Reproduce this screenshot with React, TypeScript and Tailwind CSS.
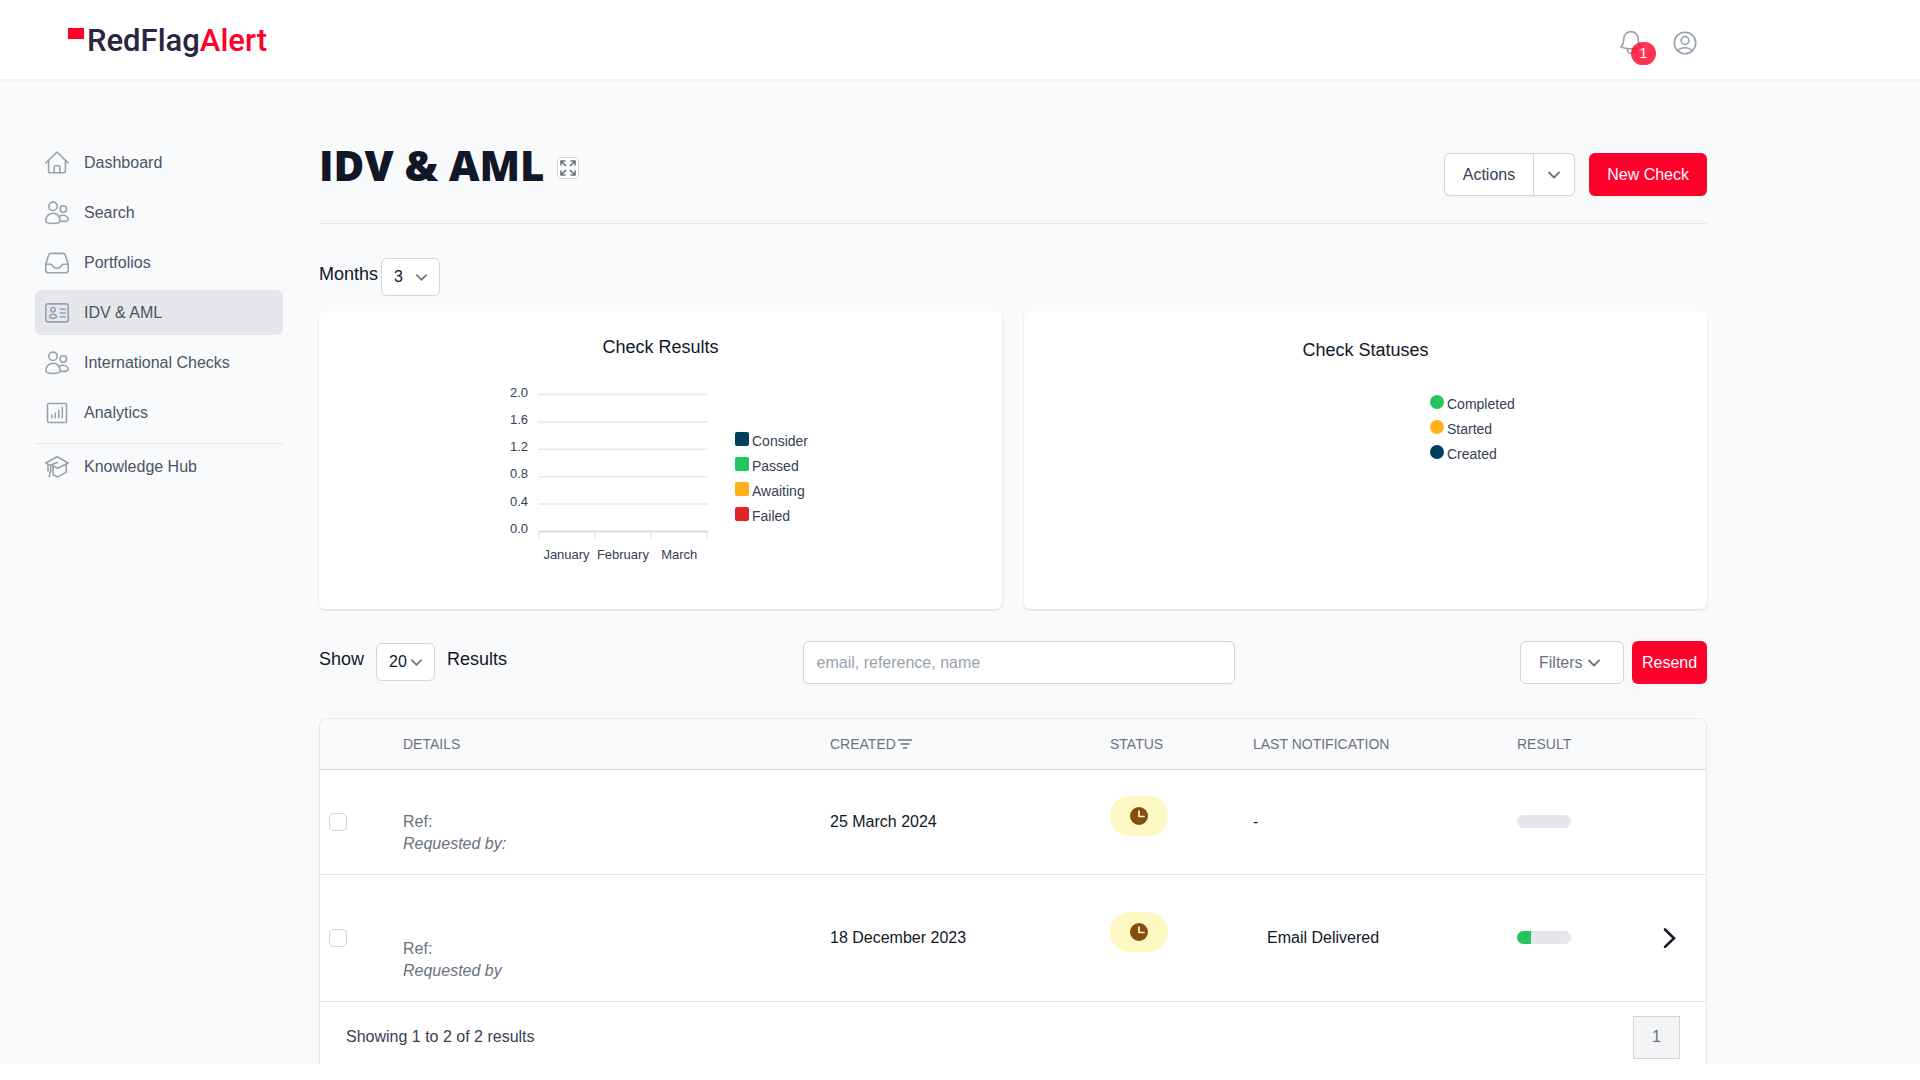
import { useState } from "react";
import type { ReactNode } from "react";

const navItems = [
  { name: "Dashboard", icon: <HouseIcon /> },
  { name: "Search", icon: <UsersIcon /> },
  { name: "Portfolios", icon: <InboxIcon /> },
  { name: "IDV & AML", icon: <IdCardIcon /> },
  { name: "International Checks", icon: <UsersIcon /> },
  { name: "Analytics", icon: <AnalyticsIcon /> },
];

const checks = [
  { id: 1, blankLines: 1, by: "Requested by:", created: "25 March 2024", notification: "-", progress: 0 },
  { id: 2, blankLines: 2, by: "Requested by", created: "18 December 2023", notification: "Email Delivered", progress: 26 },
];

export default function App() {
  const [active, setActive] = useState("IDV & AML");

  return (
    <div className="bg-[#f9fafc] font-['Liberation_Sans',Arial,sans-serif] text-base text-gray-900">
      <Header />
      <div className="flex max-w-[1707px] gap-9 pl-[35px]">
        <aside className="w-[248px] shrink-0 pt-[60px]">
          <nav>
            <div className="flex flex-col gap-[5px] border-b border-gray-200 pb-2">
              {navItems.map((item) => (
                <NavLink
                  key={item.name}
                  name={item.name}
                  icon={item.icon}
                  active={active == item.name}
                  onClick={() => setActive(item.name)}
                />
              ))}
            </div>
            <NavLink
              name="Knowledge Hub"
              icon={<HubIcon />}
              active={active == "Knowledge Hub"}
              onClick={() => setActive("Knowledge Hub")}
            />
          </nav>
        </aside>
        <main className="min-w-0 flex-1 pt-[65px]">
          <TitleBar />
          <Months />
          <div className="mt-[15px] grid grid-cols-2 gap-[22px]">
            <CheckResults />
            <CheckStatuses />
          </div>
          <Toolbar />
          <ChecksTable />
        </main>
      </div>
    </div>
  );
}

function Header() {
  return (
    <header className="border-b border-gray-100 bg-white shadow-xs">
      <div className="flex h-[79px] max-w-[1707px] items-center justify-between pr-[10px] pl-[68px]">
        <a href="#" className="flex items-center gap-[3px] pt-[2px]" aria-label="RedFlagAlert">
          <span className="-mt-[15px] h-[11px] w-4 bg-[#ff002b]"></span>
          <span className="font-[Roboto,sans-serif] text-[31px] leading-10 font-medium text-[#2d2540]">
            RedFlag<span className="text-[#ff002b]">Alert</span>
          </span>
        </a>
        <div className="flex items-center gap-[30px] pt-[6px] text-gray-400">
          <button className="relative" aria-label="Notifications">
            <BellIcon />
            <span className="absolute top-[11px] left-3 flex h-[23px] w-[25px] items-center justify-center rounded-full bg-[#ff002b]/80 text-sm text-white">
              1
            </span>
          </button>
          <button aria-label="Account">
            <UserCircleIcon />
          </button>
        </div>
      </div>
    </header>
  );
}

function NavLink({ name, icon, active, onClick }: { name: string; icon: ReactNode; active: boolean; onClick: () => void }) {
  return (
    <a
      href="#"
      onClick={onClick}
      className={`${
        active ? "bg-gray-200" : "hover:bg-gray-100"
      } flex h-[45px] items-center gap-[15px] rounded-md px-[10px] text-gray-600`}
    >
      <span className="text-gray-400">{icon}</span>
      {name}
    </a>
  );
}

function TitleBar() {
  return (
    <div className="flex items-start justify-between border-b border-gray-200 pb-[27px]">
      <div className="flex items-start gap-3">
        <h1 className="font-['Open_Sans',sans-serif] text-[42px] leading-10 font-extrabold">IDV &amp; AML</h1>
        <button
          className="mt-3 flex size-[22px] items-center justify-center rounded border border-gray-300 bg-white text-gray-500"
          aria-label="Expand"
        >
          <ExpandIcon />
        </button>
      </div>
      <div className="mt-2 flex gap-[14px]">
        <div className="flex rounded-md border border-gray-300 bg-white shadow-xs">
          <button className="px-[18px] text-gray-700">Actions</button>
          <button className="w-[41px] border-l border-gray-300 text-gray-500" aria-label="More actions">
            <ChevronDown className="mx-auto size-3" />
          </button>
        </div>
        <button className="h-[43px] rounded-md bg-[#ff002b] px-[18px] text-white shadow-xs">New Check</button>
      </div>
    </div>
  );
}

function Months() {
  const [months, setMonths] = useState("3");

  return (
    <div className="mt-[34px] flex items-start gap-[3px]">
      <label htmlFor="months" className="text-lg leading-[33px]">
        Months
      </label>
      <SelectBox id="months" value={months} onChange={setMonths} options={["3", "6", "12"]} />
    </div>
  );
}

function SelectBox({
  id,
  value,
  onChange,
  options,
}: {
  id: string;
  value: string;
  onChange: (value: string) => void;
  options: string[];
}) {
  return (
    <div className="relative">
      <select
        id={id}
        value={value}
        onChange={(e) => onChange(e.target.value)}
        className="h-[38px] w-[59px] appearance-none rounded-md border border-gray-300 bg-white pl-3"
      >
        {options.map((option) => (
          <option key={option}>{option}</option>
        ))}
      </select>
      <ChevronDown className="pointer-events-none absolute top-[14px] right-[13px] size-[11px] text-gray-500" />
    </div>
  );
}

function CheckResults() {
  return (
    <section className="rounded-md bg-white pt-[22px] pb-[45px] shadow-sm">
      <h2 className="text-center text-lg leading-7">Check Results</h2>
      <div className="mt-[23px] flex justify-center gap-[23px]">
        <ResultsChart />
        <ul className="mt-[45px] w-[84px] text-sm leading-[25px] text-gray-700">
          <LegendItem color="bg-[#003f5c] rounded-xs" label="Consider" />
          <LegendItem color="bg-[#22c55e] rounded-xs" label="Passed" />
          <LegendItem color="bg-[#ffb01a] rounded-xs" label="Awaiting" />
          <LegendItem color="bg-[#dc2626] rounded-xs" label="Failed" />
        </ul>
      </div>
    </section>
  );
}

function CheckStatuses() {
  return (
    <section className="rounded-md bg-white pt-[25px] shadow-sm">
      <h2 className="text-center text-lg leading-7">Check Statuses</h2>
      <div className="mt-7 flex justify-center">
        <div className="w-[213px]"></div>
        <ul className="w-[84px] text-sm leading-[25px] text-gray-700">
          <LegendItem color="bg-[#22c55e] rounded-full" label="Completed" />
          <LegendItem color="bg-[#ffb01a] rounded-full" label="Started" />
          <LegendItem color="bg-[#003f5c] rounded-full" label="Created" />
        </ul>
      </div>
    </section>
  );
}

function LegendItem({ color, label }: { color: string; label: string }) {
  return (
    <li className="flex items-start gap-[3px]">
      <span className={`${color} mt-[3px] size-[14px] shrink-0`}></span>
      {label}
    </li>
  );
}

function ResultsChart() {
  const labels = ["2.0", "1.6", "1.2", "0.8", "0.4", "0.0"];
  const months = ["January", "February", "March"];
  return (
    <svg width="210" height="180" viewBox="0 0 210 180" className="fill-gray-700 text-[13px]">
      {labels.map((label, i) => (
        <g key={label}>
          <text x="26" y={12.5 + i * 27.3} textAnchor="end">
            {label}
          </text>
          <line
            x1="36.5"
            x2="205.5"
            y1={10.5 + i * 27.4}
            y2={10.5 + i * 27.4}
            stroke={i == 5 ? "#dcdcdc" : "#e8e8e8"}
            strokeWidth={i == 5 ? 2 : 1.5}
          />
        </g>
      ))}
      {[37, 93, 149, 205].map((x) => (
        <line key={x} x1={x} x2={x} y1="148" y2="155" stroke="#e0e0e0" />
      ))}
      {months.map((month, i) => (
        <text key={month} x={64.5 + i * 56.4} y="175" textAnchor="middle">
          {month}
        </text>
      ))}
    </svg>
  );
}

function Toolbar() {
  const [show, setShow] = useState("20");
  const [search, setSearch] = useState("");

  return (
    <div className="mt-8 flex items-start">
      <div className="mt-[2px] flex items-start gap-3 text-lg leading-[33px]">
        <label htmlFor="show">Show</label>
        <div className="text-base">
          <SelectBox id="show" value={show} onChange={setShow} options={["20", "50", "100"]} />
        </div>
        <span>Results</span>
      </div>
      <div className="flex flex-1 justify-center pl-[10px]">
        <input
          type="text"
          aria-label="Search checks"
          value={search}
          onChange={(e) => setSearch(e.target.value)}
          placeholder="email, reference, name"
          className="h-[43px] w-[432px] rounded-md border border-gray-300 bg-white px-[13px] shadow-xs placeholder:text-gray-400"
        />
      </div>
      <div className="flex gap-2">
        <button className="flex h-[43px] w-[104px] items-center gap-[5px] rounded-md border border-gray-300 bg-white pl-[18px] text-gray-500">
          Filters
          <ChevronDown className="size-3" />
        </button>
        <button className="h-[43px] w-[75px] rounded-md bg-[#ff002b] text-white">Resend</button>
      </div>
    </div>
  );
}

function ChecksTable() {
  return (
    <div className="mt-[34px] overflow-hidden rounded-t-lg border border-b-0 border-gray-200 bg-white">
      <table className="w-full table-fixed text-left">
        <colgroup>
          <col className="w-[63px]" />
          <col />
          <col className="w-[280px]" />
          <col className="w-[143px]" />
          <col className="w-[264px]" />
          <col className="w-[107px]" />
          <col className="w-[102px]" />
        </colgroup>
        <thead>
          <tr className="h-[50px] border-b border-gray-300 bg-[#f9fafc] text-sm text-gray-500">
            <th></th>
            <th className="px-5 font-normal">DETAILS</th>
            <th className="px-5 font-normal">
              <span className="flex items-center gap-[2px]">
                CREATED
                <SortIcon />
              </span>
            </th>
            <th className="px-5 font-normal">STATUS</th>
            <th className="px-5 font-normal">LAST NOTIFICATION</th>
            <th className="px-5 font-normal">RESULT</th>
            <th></th>
          </tr>
        </thead>
        <tbody>
          {checks.map((check) => (
            <tr key={check.id} className="border-b border-gray-200">
              <td className="pl-[9px]">
                <input
                  type="checkbox"
                  aria-label={`Select check ${check.id}`}
                  className="block size-[18px] appearance-none rounded border border-gray-300 bg-white checked:bg-[#ff002b]"
                />
              </td>
              <td className="px-5 py-[19px] leading-[22px] text-gray-500">
                <div className={check.blankLines == 2 ? "h-11" : "h-[22px]"}></div>
                <div>Ref:</div>
                <div className="italic">{check.by}</div>
              </td>
              <td className="px-5">{check.created}</td>
              <td className="px-5">
                <span className="mb-3 flex h-10 w-[58px] items-center justify-center rounded-[20px] bg-[#fef9c3]">
                  <ClockIcon />
                </span>
              </td>
              <td className="px-5">
                <span className={check.notification == "-" ? "" : "pl-[14px]"}>{check.notification}</span>
              </td>
              <td className="px-5">
                <div className="h-[13px] w-[54px] overflow-hidden rounded-full bg-gray-200">
                  <div className="h-full bg-[#22c55e]" style={{ width: `${check.progress}%` }}></div>
                </div>
              </td>
              <td className="pr-6">
                {check.progress > 0 && (
                  <button className="ml-auto block" aria-label="Open check">
                    <svg className="size-6" viewBox="0 0 24 24" fill="none" stroke="#111827" strokeWidth="2.6">
                      <path d="M7 3.5l9 8.7-9 8.7" strokeLinecap="round" />
                    </svg>
                  </button>
                )}
              </td>
            </tr>
          ))}
        </tbody>
      </table>
      <div className="flex items-center justify-between px-[26px] pt-[14px] pb-[5px] text-gray-700">
        <p>Showing 1 to 2 of 2 results</p>
        <button className="h-[43px] w-[47px] border border-gray-300 bg-gray-100 text-gray-500">1</button>
      </div>
    </div>
  );
}

function ChevronDown({ className }: { className: string }) {
  return (
    <svg className={className} viewBox="0 0 12 12" fill="none" stroke="currentColor" strokeWidth="1.8">
      <path d="M1 3.5l5 5 5-5" strokeLinecap="round" strokeLinejoin="round" />
    </svg>
  );
}

function Icon({ children }: { children: ReactNode }) {
  return (
    <svg
      className="size-6"
      viewBox="0 0 24 24"
      fill="none"
      stroke="currentColor"
      strokeWidth="1.6"
      strokeLinecap="round"
      strokeLinejoin="round"
    >
      {children}
    </svg>
  );
}

function HouseIcon() {
  return (
    <Icon>
      <path d="M.8 12 12 1l11.2 11" />
      <path d="M3.6 9.5v11.3a1 1 0 0 0 1 1h14.8a1 1 0 0 0 1-1V9.5" />
      <path d="M9.2 21.7v-5.5a1.5 1.5 0 0 1 1.5-1.5h2.6a1.5 1.5 0 0 1 1.5 1.5v5.5" />
    </Icon>
  );
}

function UsersIcon() {
  return (
    <Icon>
      <circle cx="8" cy="5.3" r="4.2" />
      <circle cx="18.3" cy="8" r="3.2" />
      <path d="M8 12.3c-4 0-7.2 3.3-7.2 7.2 0 1.5 2.5 3 7.2 3s7.2-1.5 7.2-3c0-3.9-3.2-7.2-7.2-7.2Z" />
      <path d="M14.3 15.5c1-.8 2.4-1.3 3.9-1.3 2.8 0 5 2.1 5 4.2 0 1.2-1.7 2-5 2-1 0-2-.1-2.8-.3" />
    </Icon>
  );
}

function InboxIcon() {
  return (
    <Icon>
      <path d="M.8 13.3v6.2a2.2 2.2 0 0 0 2.2 2.2h18a2.2 2.2 0 0 0 2.2-2.2v-6.2L20.4 4.2a2.3 2.3 0 0 0-2.2-1.8H5.8a2.3 2.3 0 0 0-2.2 1.8L.8 13.3Z" />
      <path d="M.8 13.3h4.7c.9 0 1.6.5 2 1.2.8 1.7 2.4 2.8 4.5 2.8s3.7-1.1 4.5-2.8c.4-.7 1.1-1.2 2-1.2h4.7" />
    </Icon>
  );
}

function IdCardIcon() {
  return (
    <Icon>
      <rect x=".8" y="2.9" width="22.4" height="18" rx="2.2" />
      <circle cx="8" cy="8.7" r="2.2" />
      <path d="M8 13.2c-1.9 0-3.4 1.2-3.4 2.7 0 .7 1.2 1.2 3.4 1.2s3.4-.5 3.4-1.2c0-1.5-1.5-2.7-3.4-2.7Z" />
      <path d="M15.2 8.3h5M15.2 12h5M15.2 15.7h5" />
    </Icon>
  );
}

function AnalyticsIcon() {
  return (
    <Icon>
      <rect x="2.5" y="2.5" width="19" height="19" rx="1.5" />
      <path d="M6.8 14v2.8M10.3 12v4.8M13.8 9.3v7.5M17.3 6.3v10.5" />
    </Icon>
  );
}

function HubIcon() {
  return (
    <Icon>
      <path d="M5.6 10.6.8 8 12 1.8 23.2 8 12.5 13.2 8 11" />
      <path d="M12.3 7.6 5.7 10v7M5.7 14.5l-1.5 7M3 10v6M8 11v8.5l4.5 2.6 8.7-5V9.3" />
    </Icon>
  );
}

function BellIcon() {
  return (
    <svg
      className="size-6"
      viewBox="2 2.5 20 20"
      fill="none"
      stroke="currentColor"
      strokeWidth="1.3"
      strokeLinecap="round"
      strokeLinejoin="round"
    >
      <path d="M14.8 17.1a24 24 0 0 0 5.500-1.300A9 9 0 0 1 18 9.800V9A6 6 0 0 0 6 9v.8a9 9 0 0 1-2.300 6 24 24 0 0 0 5.500 1.300m5.600 0a24.200 24.200 0 0 1-5.600 0m5.600 0a3 3 0 1 1-5.600 0" />
    </svg>
  );
}

function UserCircleIcon() {
  return (
    <Icon>
      <circle cx="12" cy="12" r="10.7" />
      <circle cx="12" cy="9.5" r="3.9" />
      <path d="M5 20c1.2-2.4 4-3.3 7-3.3s5.8.9 7 3.3" />
    </Icon>
  );
}

function ExpandIcon() {
  return (
    <svg className="size-4 shrink-0" viewBox="0 0 16 16" fill="none" stroke="currentColor" strokeWidth="1.6">
      <path d="M1 5.5V1h4.5M1 1l5 5M10.5 1H15v4.5M15 1l-5 5M1 10.5V15h4.5M1 15l5-5M10.5 15H15v-4.5M15 15l-5-5" />
    </svg>
  );
}

function SortIcon() {
  return (
    <svg className="h-[10px] w-[14px]" viewBox="0 0 14 10" stroke="currentColor" strokeWidth="1.4">
      <path d="M0 1h14M2.5 5h9M5 9h4" />
    </svg>
  );
}

function ClockIcon() {
  return (
    <svg className="size-[18px]" viewBox="0 0 18 18" fill="none">
      <circle cx="9" cy="9" r="9" fill="#854d0e" />
      <path d="M9 4v5.5h5" stroke="#fef9c3" strokeWidth="1.7" strokeLinecap="round" />
    </svg>
  );
}
